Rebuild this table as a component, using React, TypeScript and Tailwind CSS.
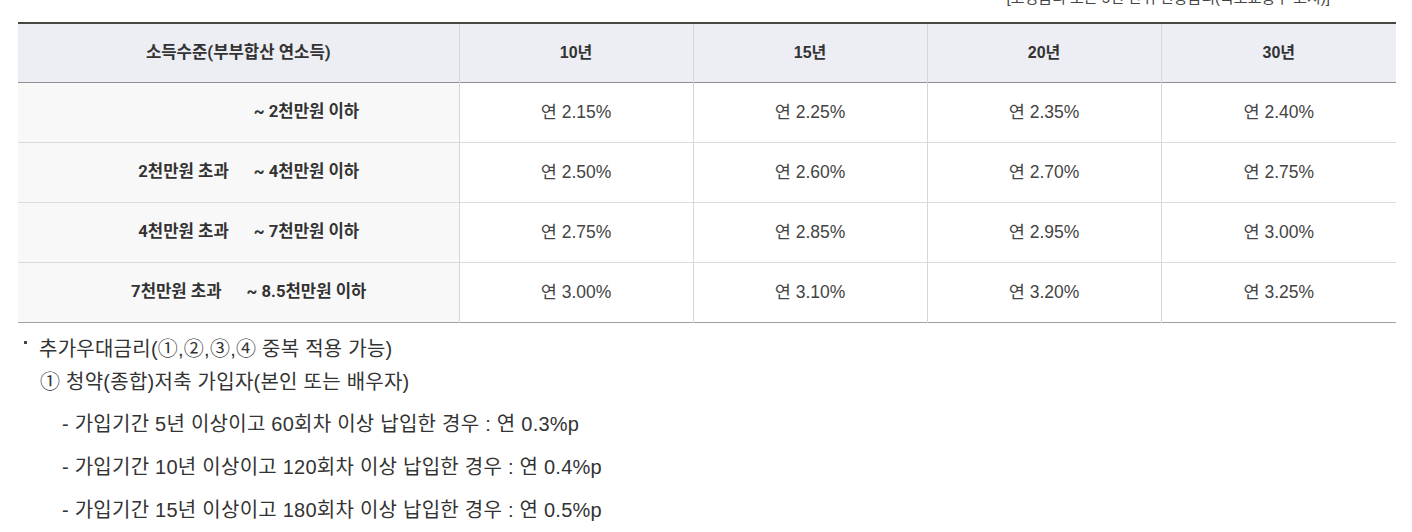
const font = {
  fontFamily: '"Liberation Sans", "Noto Sans CJK KR", Arial, sans-serif',
};
const roboto = {
  fontFamily: 'Roboto, "Noto Sans CJK KR", sans-serif',
};

const rows = [
  { from: "", to: "~ 2천만원 이하", rates: ["2.15", "2.25", "2.35", "2.40"] },
  { from: "2천만원 초과", to: "~ 4천만원 이하", rates: ["2.50", "2.60", "2.70", "2.75"] },
  { from: "4천만원 초과", to: "~ 7천만원 이하", rates: ["2.75", "2.85", "2.95", "3.00"] },
  { from: "7천만원 초과", to: "~ 8.5천만원 이하", rates: ["3.00", "3.10", "3.20", "3.25"] },
];

const terms = ["10년", "15년", "20년", "30년"];

export default function App() {
  return (
    <div className="w-[1412px] h-[532px] overflow-hidden bg-white text-[#333]" style={font}>
      <div className="h-[22px] overflow-hidden flex justify-end pr-[82px]">
        <p className="-mt-[12px] text-[15px] leading-[20px] text-[#444]">
          [고정금리 또는 5년 단위 변동금리(국토교통부 고시)]
        </p>
      </div>

      <table className="ml-[18px] w-[1378px] border-collapse table-fixed border-t-2 border-t-[#4a4640] border-b border-b-[#a0a0a0]">
        <colgroup>
          <col className="w-[441px]" />
          <col className="w-[234px]" />
          <col className="w-[234px]" />
          <col className="w-[234px]" />
          <col className="w-[235px]" />
        </colgroup>
        <thead>
          <tr className="h-[59px] bg-[#eceef3] border-b border-b-[#8f8f8f]">
            <th className="text-[16.7px] font-bold text-[#333]" style={roboto}>
              소득수준(부부합산 연소득)
            </th>
            {terms.map((t) => (
              <th key={t} className="border-l border-l-[#d6d6d6] text-[16px] font-bold text-[#333]">
                {t}
              </th>
            ))}
          </tr>
        </thead>
        <tbody>
          {rows.map((r, i) => (
            <tr key={i} className={`h-[60px] ${i < rows.length - 1 ? "border-b border-b-[#dcdcdc]" : ""}`}>
              <td className="bg-[#f8f8f8] text-center pl-[21px] text-[16.7px] font-bold text-[#333]" style={roboto}>
                <span className={r.from ? "" : "invisible"}>{r.from || "2천만원 초과"}</span>
                <span className="ml-[25px]">{r.to}</span>
              </td>
              {r.rates.map((v, j) => (
                <td key={j} className="border-l border-l-[#d6d6d6] text-center text-[17.5px] text-[#444]">
                  연 {v}%
                </td>
              ))}
            </tr>
          ))}
        </tbody>
      </table>

      <div className="pl-[24px] pt-[13px] text-[20px] tracking-[0.25px] text-[#333] leading-[26px]">
        <div className="flex items-start">
          <span className="mt-[5px] mr-[12px] block w-[3px] h-[3px] bg-[#444]" />
          <span>추가우대금리(①,②,③,④ 중복 적용 가능)</span>
        </div>
        <p className="pl-[16px] mt-[7px]">① 청약(종합)저축 가입자(본인 또는 배우자)</p>
        <div className="pl-[38px]">
          <p className="mt-[16px]">- 가입기간 5년 이상이고 60회차 이상 납입한 경우 : 연 0.3%p</p>
          <p className="mt-[17px]">- 가입기간 10년 이상이고 120회차 이상 납입한 경우 : 연 0.4%p</p>
          <p className="mt-[17px]">- 가입기간 15년 이상이고 180회차 이상 납입한 경우 : 연 0.5%p</p>
        </div>
      </div>
    </div>
  );
}
